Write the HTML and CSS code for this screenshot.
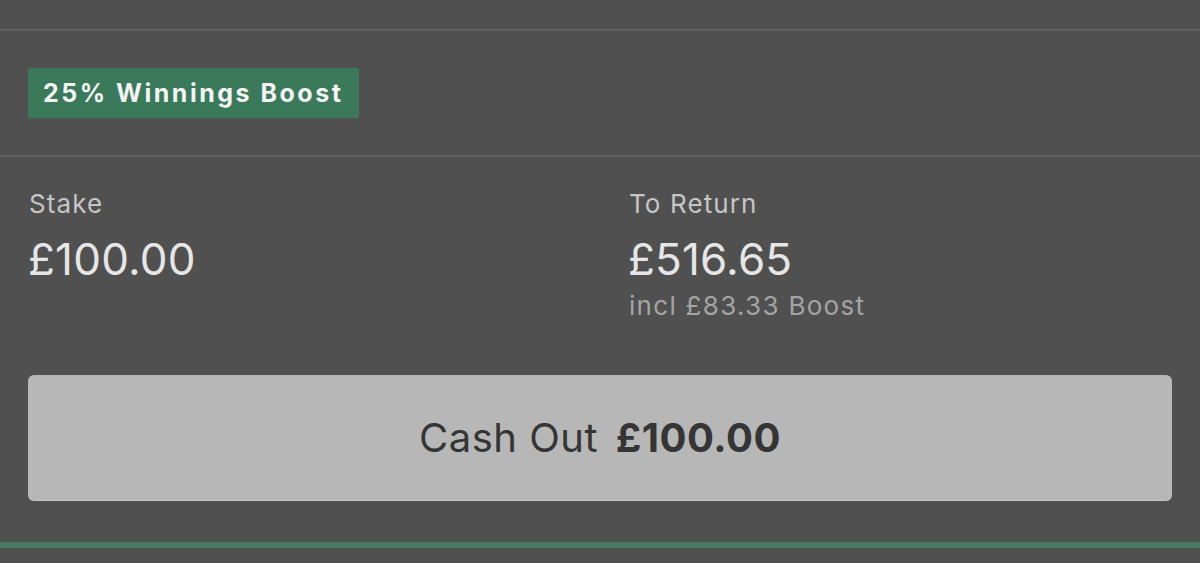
FILE: index.html
```html
<!DOCTYPE html>
<html lang="en">
<head>
    <meta charset="UTF-8">
    <meta name="viewport" content="width=device-width, initial-scale=1.0">
    <title>Bet Receipt</title>
    <link rel="stylesheet" href="styles.css">
</head>
<body>
    <div class="bet">
        <div class="top-row"></div>
        <div class="boost-row">
            <span class="boost-badge">25% Winnings Boost</span>
        </div>
        <div class="summary">
            <div class="figures">
                <div class="figure">
                    <div class="label">Stake</div>
                    <div class="amount">£100.00</div>
                </div>
                <div class="figure">
                    <div class="label">To Return</div>
                    <div class="amount">£516.65</div>
                    <div class="note">incl £83.33 Boost</div>
                </div>
            </div>
            <button class="cash-out">Cash Out <strong>£100.00</strong></button>
        </div>
        <div class="bottom-bar"></div>
    </div>
</body>
</html>
```

FILE: styles.css
```css
body {
    margin: 0;
    background-color: #505050;
    font-family: Inter, "Noto Sans", sans-serif;
}

.bet {
    display: flex;
    flex-direction: column;
    height: 563px;
}

.top-row {
    height: 29px;
    border-bottom: 2px solid #5f5f5f;
}

.boost-row {
    display: flex;
    align-items: flex-start;
    padding: 37px 28px 0;
    height: 87px;
    border-bottom: 2px solid #5f5f5f;
}

.boost-badge {
    display: flex;
    align-items: center;
    height: 50px;
    padding: 0 16px 0 15px;
    background-color: #3a7a5b;
    border-radius: 2px;
    color: #f4f4f4;
    font-size: 25px;
    font-weight: 700;
    letter-spacing: 2.5px;
}

.summary {
    padding: 0 28px;
    height: 385px;
}

.figures {
    display: grid;
    grid-template-columns: 600px 1fr;
    padding-top: 31px;
    height: 218px;
    box-sizing: border-box;
}

.label {
    color: #c6c6c6;
    font-size: 26px;
    line-height: 32px;
    letter-spacing: 1.1px;
    padding-left: 1px;
}

.amount {
    color: #e6e6e6;
    font-size: 44px;
    line-height: 50px;
    letter-spacing: 0.2px;
    margin-top: 14px;
}

.note {
    color: #a4a4a4;
    font-size: 26px;
    line-height: 32px;
    letter-spacing: 1.3px;
    margin-top: 6px;
    padding-left: 1px;
}

.cash-out {
    display: block;
    width: 100%;
    height: 125px;
    border: none;
    border-radius: 6px;
    background-color: #b7b7b7;
    color: #353535;
    font-family: inherit;
    font-size: 40px;
    letter-spacing: 0.5px;
    box-shadow: 0 1px 0 #c4c4c4;
}

.cash-out strong {
    font-weight: 700;
    margin-left: 6px;
}

.bottom-bar {
    height: 6px;
    background-color: #4a7a66;
}
```
